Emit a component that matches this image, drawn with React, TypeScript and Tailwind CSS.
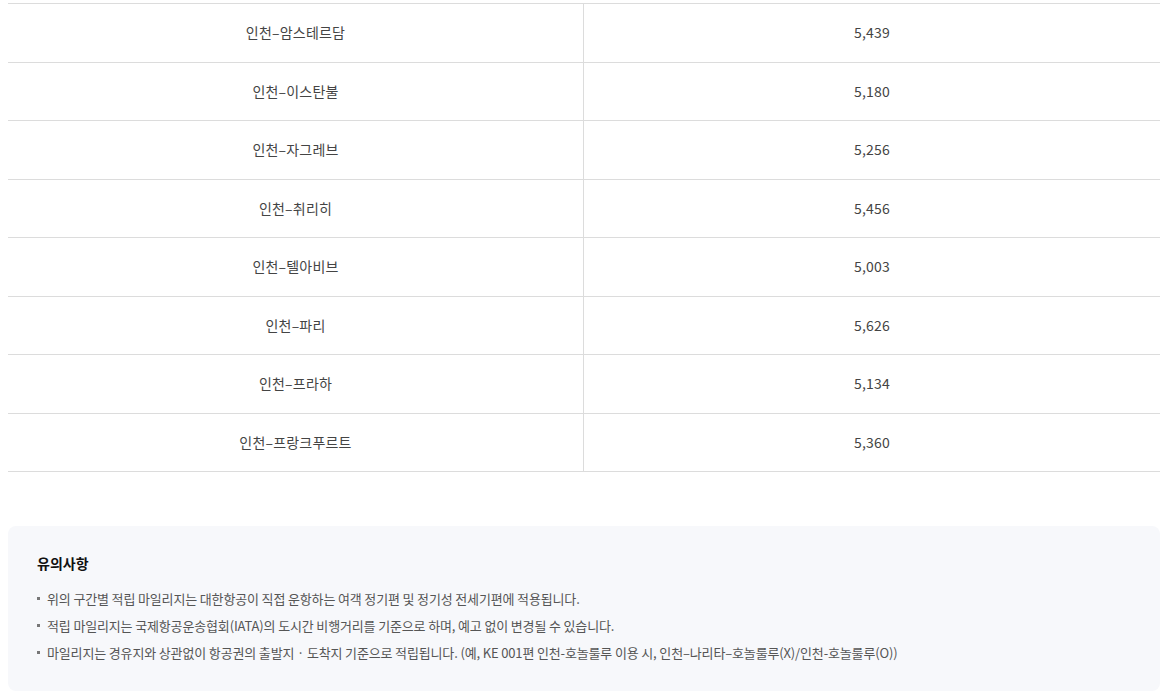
const routes = [
  { route: "인천–암스테르담", miles: "5,439" },
  { route: "인천–이스탄불", miles: "5,180" },
  { route: "인천–자그레브", miles: "5,256" },
  { route: "인천–취리히", miles: "5,456" },
  { route: "인천–텔아비브", miles: "5,003" },
  { route: "인천–파리", miles: "5,626" },
  { route: "인천–프라하", miles: "5,134" },
  { route: "인천–프랑크푸르트", miles: "5,360" },
];

const notes = [
  "위의 구간별 적립 마일리지는 대한항공이 직접 운항하는 여객 정기편 및 정기성 전세기편에 적용됩니다.",
  "적립 마일리지는 국제항공운송협회(IATA)의 도시간 비행거리를 기준으로 하며, 예고 없이 변경될 수 있습니다.",
  "마일리지는 경유지와 상관없이 항공권의 출발지 · 도착지 기준으로 적립됩니다. (예, KE 001편 인천-호놀룰루 이용 시, 인천–나리타–호놀룰루(X)/인천-호놀룰루(O))",
];

export default function App() {
  return (
    <main className="min-h-screen bg-white px-2 pt-[3px] font-['Noto_Sans_CJK_KR','Noto_Sans',sans-serif] text-[#444]">
      {/* Mileage table */}
      <div className="border-t border-[#dcdcdc]">
        {routes.map((r) => (
          <div key={r.route} className="grid h-[58.5px] grid-cols-[575px_1fr] border-b border-[#dcdcdc] text-[14px] tracking-[0.2px]">
            <div className="flex items-center justify-center">{r.route}</div>
            <div className="flex items-center justify-center border-l border-[#dcdcdc]">{r.miles}</div>
          </div>
        ))}
      </div>

      {/* Notes */}
      <section className="mt-[54px] rounded-lg bg-[#f7f8fb] px-[29px] pt-[27px] pb-[29px]">
        <h3 className="text-[14px] font-bold text-[#111]">유의사항</h3>
        <ul className="mt-[15px] flex flex-col gap-[8px] text-[13px] tracking-[-0.15px] text-[#555]">
          {notes.map((n) => (
            <li key={n} className="flex items-center gap-[7px] leading-[19px]">
              <span className="h-[3px] w-[3px] shrink-0 bg-[#777]" />
              <span>{n}</span>
            </li>
          ))}
        </ul>
      </section>
    </main>
  );
}
